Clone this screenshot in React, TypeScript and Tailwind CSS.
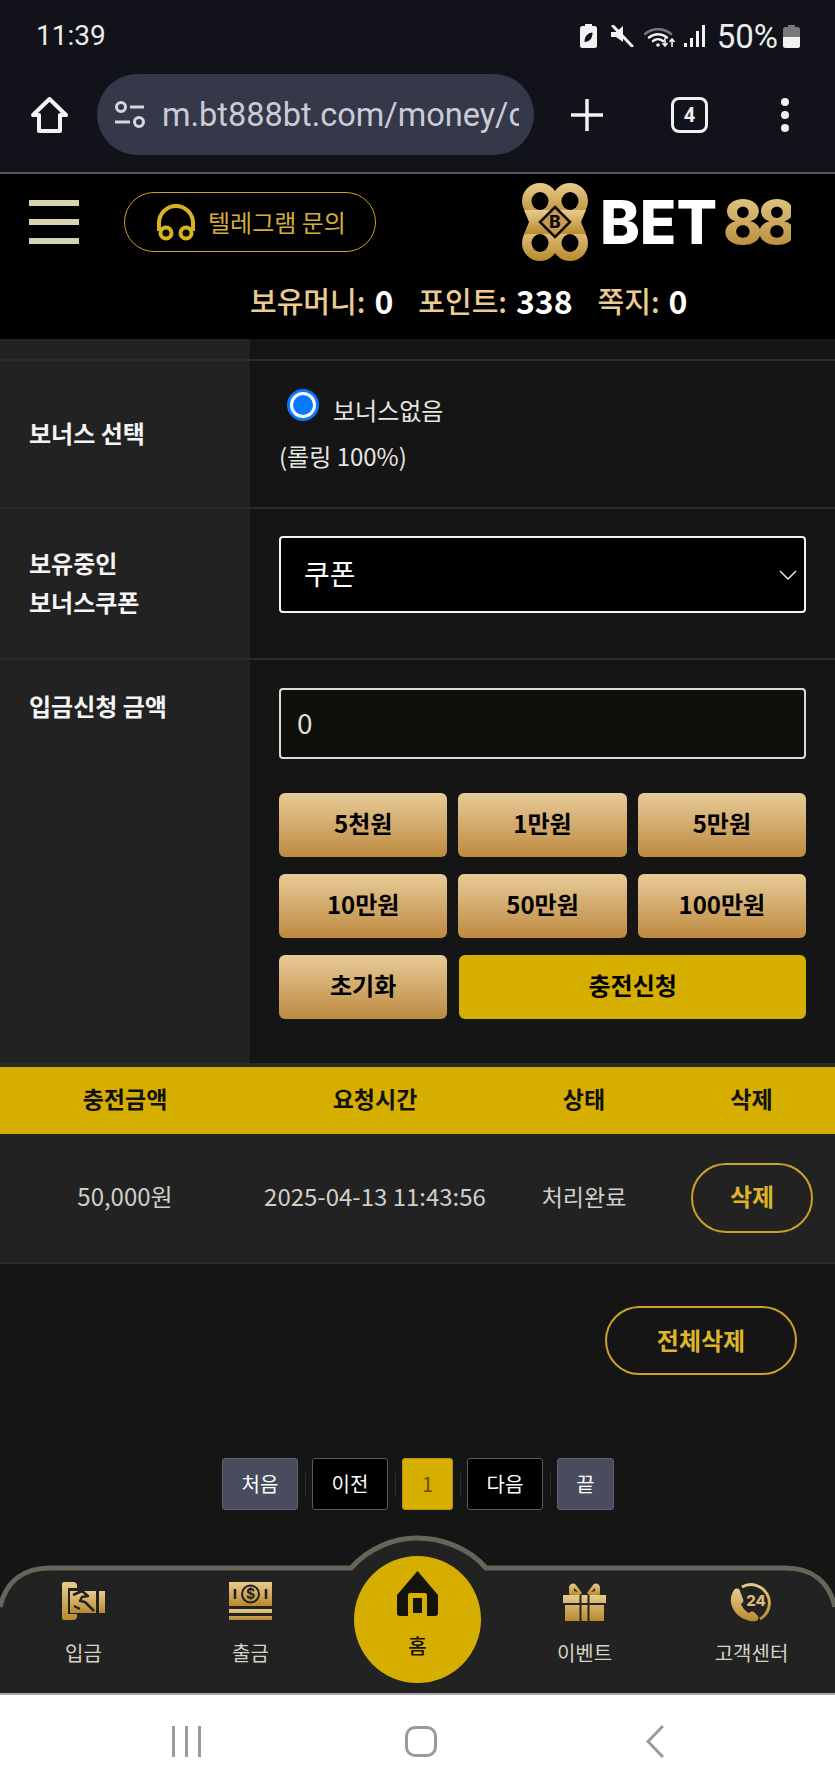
import React from "react";

const KR = { fontFamily: '"Noto Sans CJK KR", "Noto Sans", sans-serif' };

const Gold = ({ id }: { id: string }) => (
  <defs>
    <linearGradient id={id} x1="0" y1="0" x2="0" y2="1">
      <stop offset="0" stopColor="#e8cb8c" />
      <stop offset="1" stopColor="#b98a2e" />
    </linearGradient>
  </defs>
);

const StatusIcons = () => (
  <div className="flex items-center">
    <svg width="17" height="24" viewBox="0 0 17 24" fill="#f2f2f2">
      <path d="M5 0h7v2h2.500a2.500 2.500 0 0 1 2.500 2.500V21.500a2.500 2.500 0 0 1-2.500 2.500H2.500A2.500 2.500 0 0 1 0 21.500V4.500A2.500 2.500 0 0 1 2.500 2H5z" />
      <path d="M4.500 18c0-6 3-9 8-9.500 0 6-3 9.500-8 9.500z" fill="#12131a" />
    </svg>
    <svg className="ml-[13px]" width="24" height="22" viewBox="0 0 24 22">
      <path d="M1 7h5l7-6v16l-7-5H1z" fill="#f2f2f2" />
      <path d="M3 1l19 20" stroke="#f2f2f2" strokeWidth="3" strokeLinecap="round" />
    </svg>
    <svg className="ml-[10px]" width="31" height="23" viewBox="0 0 31 23" fill="none">
      <path d="M1 9a20 20 0 0 1 26 0" stroke="#77787c" strokeWidth="2.500" strokeLinecap="round" />
      <path d="M5 12.500a14 14 0 0 1 18 0" stroke="#f2f2f2" strokeWidth="2.500" strokeLinecap="round" />
      <path d="M9 16a8 8 0 0 1 10 0" stroke="#f2f2f2" strokeWidth="2.500" strokeLinecap="round" />
      <circle cx="14" cy="20" r="1.800" fill="#f2f2f2" />
      <path d="M21 13v8m-2.500-3l2.500 3 2.500-3M28 22v-8m-2.500 3l2.500-3 2.500 3" stroke="#f2f2f2" strokeWidth="1.600" />
    </svg>
    <svg className="ml-[9px]" width="21" height="22" viewBox="0 0 21 22" fill="#f2f2f2">
      <rect x="0" y="18" width="3" height="4" />
      <rect x="6" y="13" width="3" height="9" />
      <rect x="12" y="6" width="3" height="16" />
      <rect x="18" y="0" width="3" height="22" />
    </svg>
    <span className="ml-[12px] text-[33px] leading-none text-[#ececec]" style={{ fontFamily: "Roboto, sans-serif" }}>
      50%
    </span>
    <svg className="ml-[5px]" width="17" height="23" viewBox="0 0 17 23">
      <path d="M5 0h7v2h2.500A2.500 2.500 0 0 1 17 4.500V12H0V4.500A2.500 2.500 0 0 1 2.500 2H5z" fill="#77787c" />
      <path d="M0 12h17v8.500a2.500 2.500 0 0 1-2.500 2.500h-12A2.500 2.500 0 0 1 0 20.500z" fill="#f2f2f2" />
    </svg>
  </div>
);

const BrowserBar = () => (
  <div className="bg-[#12131a]" style={{ fontFamily: "Roboto, sans-serif" }}>
    <div className="flex h-[72px] items-center justify-between pl-[36px] pr-[35px]">
      <span className="text-[28px] leading-none text-[#ececec]">11:39</span>
      <StatusIcons />
    </div>
    <div className="flex h-[102px] items-start border-b-2 border-[#55565c]">
      <svg className="ml-[31px] mt-[25px]" width="37" height="36" viewBox="0 0 37 36" fill="none" stroke="#f4f4f4" strokeWidth="4" strokeLinejoin="round">
        <path d="M18.500 2L35 18h-6v16H8V18H2z" />
      </svg>
      <div className="ml-[29px] mt-[2px] flex h-[81px] w-[437px] items-center overflow-hidden rounded-full bg-[#343848] pl-[17px]">
        <svg className="shrink-0" width="31" height="28" viewBox="0 0 31 28" fill="none" stroke="#d5d7e0" strokeWidth="3">
          <circle cx="7" cy="6" r="4.500" />
          <path d="M16 6h14M1 21h15" />
          <circle cx="25" cy="21" r="4.500" />
        </svg>
        <span className="ml-[17px] w-[357px] shrink-0 overflow-hidden whitespace-nowrap text-[32.500px] leading-[40px] text-[#c9cbd6]">
          m.bt888bt.com/money/c
        </span>
      </div>
      <svg className="ml-[37px] mt-[27px]" width="32" height="32" viewBox="0 0 32 32" stroke="#f4f4f4" strokeWidth="3.500">
        <path d="M16 0v32M0 16h32" />
      </svg>
      <div className="ml-[68px] mt-[25px] flex h-[36px] w-[37px] items-center justify-center rounded-[8px] border-[3.500px] border-[#f0f0f0] text-[20px] font-bold leading-none text-[#f0f0f0]">
        4
      </div>
      <div className="ml-[73px] mt-[26px] flex h-[34px] flex-col justify-between">
        <span className="size-[8px] rounded-full bg-[#f0f0f0]" />
        <span className="size-[8px] rounded-full bg-[#f0f0f0]" />
        <span className="size-[8px] rounded-full bg-[#f0f0f0]" />
      </div>
    </div>
  </div>
);

const Logo = () => (
  <div className="flex items-center">
    <svg width="68" height="80" viewBox="0 0 68 80">
      <Gold id="lg" />
      <g fill="url(#lg)">
        <circle cx="19" cy="19" r="18" />
        <circle cx="49" cy="19" r="18" />
        <circle cx="19" cy="61" r="18" />
        <circle cx="49" cy="61" r="18" />
        <path d="M3 28h62l-5 12 5 12H3l5-12z" />
      </g>
      <g fill="#000">
        <ellipse cx="19" cy="19" rx="8.500" ry="9" />
        <ellipse cx="49" cy="19" rx="8.500" ry="9" />
        <ellipse cx="19" cy="61" rx="8.500" ry="9" />
        <ellipse cx="49" cy="61" rx="8.500" ry="9" />
      </g>
      <path d="M34 25l15 15-15 15-15-15z" fill="#c89a4d" stroke="#0c0a06" strokeWidth="2.500" />
      <text x="34" y="46" textAnchor="middle" fontSize="17" fontWeight="800" fill="#0c0a06" fontFamily="Inter, sans-serif">
        B
      </text>
    </svg>
    <span className="ml-[11px] text-[60px] font-extrabold leading-none text-white" style={{ fontFamily: "Inter, sans-serif" }}>
      BET
    </span>
    <span
      className="ml-[6px] bg-linear-to-b from-[#e6c887] to-[#b58a34] bg-clip-text text-[60px] font-extrabold leading-none tracking-[-6px] text-transparent"
      style={{ fontFamily: "Inter, sans-serif" }}
    >
      88
    </span>
  </div>
);

const Header = () => (
  <div className="bg-black" style={KR}>
    <div className="flex h-[96px] items-center">
      <div className="ml-[29px] flex w-[50px] flex-col gap-[13px]">
        <span className="h-[6px] bg-[#d5d3b0]" />
        <span className="h-[6px] bg-[#d5d3b0]" />
        <span className="h-[6px] bg-[#d5d3b0]" />
      </div>
      <div className="ml-[45px] flex h-[60px] w-[252px] items-center rounded-full border-[1.500px] border-[#c9a227] pl-[31px]">
        <svg width="40" height="38" viewBox="0 0 40 38" fill="none" stroke="#d9b422" strokeWidth="4">
          <path d="M3 28V20a17 17 0 0 1 34 0v8" />
          <circle cx="10" cy="30" r="5.500" />
          <circle cx="30" cy="30" r="5.500" />
        </svg>
        <span className="ml-[12px] whitespace-nowrap text-[24px] leading-none text-[#d4ae3e]">텔레그램 문의</span>
      </div>
      <div className="ml-[145px]">
        <Logo />
      </div>
    </div>
    <div className="flex h-[69px] items-center whitespace-nowrap pb-[9px] pl-[250px] text-[29px] font-medium leading-none text-[#eccb93]">
      <span>보유머니:</span>
      <span className="ml-[9px] text-[32px] font-bold text-white">0</span>
      <span className="ml-[25px]">포인트:</span>
      <span className="ml-[9px] text-[32px] font-bold text-white">338</span>
      <span className="ml-[25px]">쪽지:</span>
      <span className="ml-[9px] text-[32px] font-bold text-white">0</span>
    </div>
  </div>
);

const FormRow = ({ label, top, children }: { label: React.ReactNode; top?: boolean; children: React.ReactNode }) => (
  <div className="flex border-t-2 border-[#2c2b28]">
    <div className={`flex w-[250px] shrink-0 bg-[#222222] pl-[29px] text-[24px] font-bold leading-[39px] text-[#f5f5f5] ${top ? "items-start pt-[26px]" : "items-center pb-[4px]"}`}>
      <div>{label}</div>
    </div>
    <div className="flex-1 pl-[29px] pr-[29px]">{children}</div>
  </div>
);

const AmountButton = ({ children }: { children: React.ReactNode }) => (
  <div className="flex h-[64px] items-center justify-center rounded-[6px] bg-linear-to-b from-[#e8cb98] to-[#bd8a3e] pb-[4px] text-[24px] font-bold text-black">
    {children}
  </div>
);

const DepositForm = () => (
  <div style={KR} className="bg-[#151515]">
    <div className="flex h-[20px]">
      <div className="w-[250px] bg-[#222222]" />
    </div>
    <FormRow label="보너스 선택">
      <div className="h-[146px] text-[24px] leading-none text-[#e6e6e0]">
        <div className="flex items-start pl-[8px] pt-[28px]">
          <span className="flex size-[32px] items-center justify-center rounded-full border-[3px] border-[#0a78ff] bg-white">
            <span className="size-[20px] rounded-full bg-[#0a78ff]" />
          </span>
          <span className="ml-[14px] mt-[9px]">보너스없음</span>
        </div>
        <div className="mt-[22px]">(롤링 100%)</div>
      </div>
    </FormRow>
    <FormRow
      label={
        <>
          보유중인
          <br />
          보너스쿠폰
        </>
      }
    >
      <div className="flex h-[149px] items-start pt-[27px]">
        <div className="relative w-full">
          <select className="h-[77px] w-full appearance-none rounded-[4px] border-2 border-[#f2f2f2] bg-black pb-[4px] pl-[23px] text-[28px] text-white outline-none">
            <option>쿠폰</option>
          </select>
          <svg className="absolute right-[9px] top-[34px]" width="18" height="10" viewBox="0 0 18 10" fill="none" stroke="#e6e6e6" strokeWidth="1.500">
            <path d="M1 1l8 8 8-8" />
          </svg>
        </div>
      </div>
    </FormRow>
    <FormRow label="입금신청 금액" top>
      <div className="h-[403px] pt-[28px]">
        <input
          readOnly
          value="0"
          className="h-[71px] w-full rounded-[4px] border-2 border-[#dcdcd6] bg-[#0f0f0b] pb-[4px] pl-[16px] text-[28px] text-[#dedede] outline-none"
        />
        <div className="mt-[34px] grid grid-cols-3 gap-x-[11px] gap-y-[17px]">
          <AmountButton>5천원</AmountButton>
          <AmountButton>1만원</AmountButton>
          <AmountButton>5만원</AmountButton>
          <AmountButton>10만원</AmountButton>
          <AmountButton>50만원</AmountButton>
          <AmountButton>100만원</AmountButton>
          <AmountButton>초기화</AmountButton>
          <div className="col-span-2 ml-px flex h-[64px] items-center justify-center rounded-[6px] bg-[#d6ae00] pb-[4px] text-[24px] font-bold text-black">
            충전신청
          </div>
        </div>
      </div>
    </FormRow>
  </div>
);

const HistoryTable = () => (
  <div style={KR} className="border-t-4 border-[#2a2a2a]">
    <div className="grid h-[67px] grid-cols-[250px_250px_168px_167px] items-center bg-[#d6ae00] pb-[4px] text-center text-[23px] font-bold text-[#111]">
      <span>충전금액</span>
      <span>요청시간</span>
      <span>상태</span>
      <span>삭제</span>
    </div>
    <div className="grid h-[130px] grid-cols-[250px_250px_168px_167px] items-center border-b-2 border-[#2c2c2c] bg-[#222222] pb-[4px] text-center text-[24px] text-[#cfcfc8]">
      <span>50,000원</span>
      <span className="whitespace-nowrap">2025-04-13 11:43:56</span>
      <span className="text-[23px]">처리완료</span>
      <div className="mt-[4px] flex justify-end pr-[22px]">
        <span className="flex h-[70px] w-[122px] items-center justify-center rounded-full border-2 border-[#c9a227] pb-[4px] font-bold text-[#dcb52c]">
          삭제
        </span>
      </div>
    </div>
  </div>
);

const PageButton = ({ children, className }: { children: React.ReactNode; className: string }) => (
  <div className={`flex h-[52px] items-center justify-center rounded-[3px] border text-[20px] ${className}`}>{children}</div>
);

const Sep = () => <span className="mx-[6.500px] h-[23px] w-px bg-[#2e2e2e]" />;

const Pagination = () => (
  <div className="mt-[83px] flex items-center justify-center pl-px" style={KR}>
    <div className="flex items-center">
      <PageButton className="w-[76px] border-[#5b5f6e] bg-[#484c5e] text-white">처음</PageButton>
      <Sep />
      <PageButton className="w-[76px] border-[#5a5a5a] bg-black text-white">이전</PageButton>
      <Sep />
      <PageButton className="w-[51px] border-[#b8970a] bg-[#d6ae00] text-[#6b5300]">1</PageButton>
      <Sep />
      <PageButton className="w-[76px] border-[#5a5a5a] bg-black text-white">다음</PageButton>
      <Sep />
      <PageButton className="w-[57px] border-[#5b5f6e] bg-[#484c5e] text-white">끝</PageButton>
    </div>
  </div>
);

const DepositIcon = () => (
  <svg width="43" height="38" viewBox="0 0 43 38">
    <Gold id="dep" />
    <path d="M0 2a2 2 0 0 1 2-2h9a4 4 0 0 1 4 4v2H6v26h9v2a4 4 0 0 1-4 4H2a2 2 0 0 1-2-2z" fill="url(#dep)" />
    <path d="M8 9h26v22H8z" fill="url(#dep)" />
    <path d="M37 9h6v22h-6z" fill="url(#dep)" />
    <path d="M11 13l9-4 6 5-6 1-2 4 5 1 9 9M12 24l6 3" fill="none" stroke="#222" strokeWidth="2.500" strokeLinejoin="round" />
  </svg>
);

const WithdrawIcon = () => (
  <svg width="43" height="38" viewBox="0 0 43 38">
    <Gold id="wit" />
    <path d="M0 0h43v24H0z" fill="url(#wit)" />
    <path d="M0 27h43v4H0zM0 34h43v4H0z" fill="url(#wit)" />
    <circle cx="21.500" cy="12" r="8.500" fill="none" stroke="#222" strokeWidth="2" />
    <text x="21.500" y="17" textAnchor="middle" fontSize="14" fontWeight="700" fill="#222" fontFamily="Inter, sans-serif">
      $
    </text>
    <path d="M6 7v10M37 7v10" stroke="#222" strokeWidth="2.500" />
  </svg>
);

const GiftIcon = () => (
  <svg width="43" height="39" viewBox="0 0 43 39">
    <Gold id="gif" />
    <path d="M6 12V5a4 4 0 0 1 7-2l6 8-2 2H7zM37 12V5a4 4 0 0 0-7-2l-6 8 2 2h10z" fill="url(#gif)" />
    <path d="M11 9V6l4 4zM32 9V6l-4 4z" fill="#222" />
    <path d="M0 13h43v8H0zM2 23h39v16H2z" fill="url(#gif)" />
    <path d="M17.500 13v26M25.500 13v26" stroke="#222" strokeWidth="2" />
  </svg>
);

const SupportIcon = () => (
  <svg width="43" height="40" viewBox="0 0 43 40" fill="none">
    <Gold id="sup" />
    <path d="M12 5a18 18 0 1 1 18 32" stroke="url(#sup)" strokeWidth="3" />
    <path d="M4 8c-6 9-3 19 5 26 5 4 12 6 17 5 3-1 3-4 1-6l-3-3c-2-1-4 0-5 1-3-1-7-6-8-9 2-1 3-3 2-5l-3-8c-1-3-4-3-6-1z" fill="url(#sup)" />
    <text x="26" y="24" textAnchor="middle" fontSize="15" fontWeight="800" fill="#dcbb74" fontFamily="Inter, sans-serif">
      24
    </text>
  </svg>
);

const NavItem = ({ icon, label }: { icon: React.ReactNode; label: string }) => (
  <div className="flex flex-col items-center">
    <div className="h-[38px]">{icon}</div>
    <span className="mt-[20px] text-[20px] leading-[26px] text-[#d5d3c4]">{label}</span>
  </div>
);

const BottomNav = () => (
  <div className="relative mt-[25px] h-[158px]" style={KR}>
    <svg className="absolute inset-0" width="835" height="158" viewBox="0 0 835 158">
      <path d="M0 72C6 46 24 33 50 33H351C370 12 395 3 417 3C440 3 468 12 486 33H785C811 33 829 46 835 72V158H0Z" fill="#222222" />
      <path d="M0 72C6 46 24 33 50 33H351C370 12 395 3 417 3C440 3 468 12 486 33H785C811 33 829 46 835 72" fill="none" stroke="#66655a" strokeWidth="5" />
    </svg>
    <div className="relative grid grid-cols-5 pt-[47px]">
      <NavItem icon={<DepositIcon />} label="입금" />
      <NavItem icon={<WithdrawIcon />} label="출금" />
      <div className="flex justify-center">
        <div className="-mt-[26px] flex size-[127px] flex-col items-center rounded-full bg-[#d6ae00] pt-[15px]">
          <svg width="41" height="45" viewBox="0 0 41 45">
            <path d="M20.500 0L41 24v18a3 3 0 0 1-3 3H3a3 3 0 0 1-3-3V24z" fill="#14130c" />
            <path d="M11 45V24a2 2 0 0 1 2-2h15a2 2 0 0 1 2 2v21z" fill="#d6ae00" />
            <path d="M16 27h9v15h-9z" fill="#14130c" />
          </svg>
          <span className="mt-[17px] text-[20px] font-medium leading-[26px] text-[#14130c]">홈</span>
        </div>
      </div>
      <NavItem icon={<GiftIcon />} label="이벤트" />
      <NavItem icon={<SupportIcon />} label="고객센터" />
    </div>
  </div>
);

const AndroidNav = () => (
  <div className="flex h-[98px] items-center justify-center border-t-2 border-[#a8a8a8] bg-white pb-[3px]">
    <div className="flex w-[29px] justify-between">
      <span className="h-[31px] w-[3px] bg-[#9a9a9a]" />
      <span className="h-[31px] w-[3px] bg-[#9a9a9a]" />
      <span className="h-[31px] w-[3px] bg-[#9a9a9a]" />
    </div>
    <span className="ml-[204px] h-[31px] w-[32px] rounded-[10px] border-[3px] border-[#9a9a9a]" />
    <svg className="ml-[209px]" width="18" height="33" viewBox="0 0 18 33" fill="none" stroke="#9a9a9a" strokeWidth="3">
      <path d="M17 1L2 16.500 17 32" />
    </svg>
  </div>
);

export default function App() {
  return (
    <div className="flex h-[1791px] w-[835px] flex-col overflow-hidden bg-[#151515]">
      <BrowserBar />
      <Header />
      <DepositForm />
      <HistoryTable />
      <div className="flex-1" style={KR}>
        <div className="flex justify-end pr-[38px] pt-[42px]">
          <div className="flex h-[69px] w-[192px] items-center justify-center rounded-full border-2 border-[#c9a227] pb-[2px] text-[24px] font-bold text-[#dcb52c]">
            전체삭제
          </div>
        </div>
        <Pagination />
        <BottomNav />
      </div>
      <AndroidNav />
    </div>
  );
}
